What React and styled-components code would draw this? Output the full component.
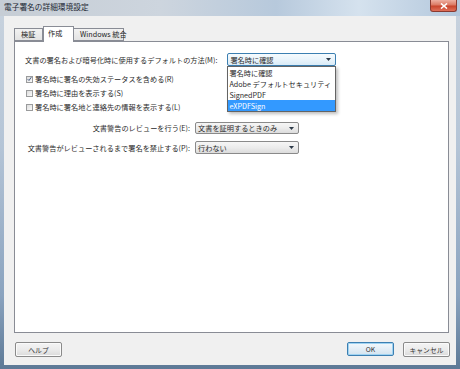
import React from "react";
import styled, { createGlobalStyle } from "styled-components";

const Global = createGlobalStyle`
  html, body { margin: 0; padding: 0; }
  body { width: 460px; height: 369px; overflow: hidden; font-family: "Noto Sans CJK JP", "Noto Sans", sans-serif; }
  * { box-sizing: border-box; }
`;

const Window = styled.div`
  width: 460px;
  height: 369px;
  display: flex;
  flex-direction: column;
  background: linear-gradient(to bottom, #c9d3de 0%, #b4c4d6 40%, #8aa3bf 80%, #5d7996 100%);
`;

const TitleBar = styled.div`
  height: 16px;
  flex: none;
  display: flex;
  align-items: center;
  justify-content: space-between;
  padding-left: 4px;
  background: linear-gradient(to right, #c6cdd5 0%, #cdd5de 35%, #b7c9dc 60%, #d5e2ee 78%, #b3c7dc 100%);
`;

const Title = styled.span`
  font-size: 7.7px;
  line-height: 10px;
  color: #1c2733;
  margin-top: -2px;
`;

const CloseButton = styled.div`
  align-self: flex-start;
  width: 27px;
  height: 12px;
  margin-right: 3px;
  border: 1px solid #8a3a30;
  border-top: none;
  border-radius: 0 0 3px 3px;
  background: linear-gradient(to bottom, #eeb0a2 0%, #dc7a64 45%, #c8452c 55%, #e0705a 100%);
  display: flex;
  align-items: center;
  justify-content: center;
`;

const Body = styled.div`
  flex: 1;
  margin: 0 4px 4px;
  background: #f0f0f0;
  display: flex;
  flex-direction: column;
  padding: 9px 6px 0 10px;
`;

const TabStrip = styled.div`
  display: flex;
  align-items: flex-end;
  height: 16px;
  position: relative;
  z-index: 1;
  margin-right: 1px;
`;

const Tab = styled.div`
  height: ${(p) => (p.$active ? "16px" : "13px")};
  margin-bottom: ${(p) => (p.$active ? "-1px" : "0")};
  width: ${(p) => p.$w}px;
  border: 1px solid #898c95;
  border-bottom: ${(p) => (p.$active ? "none" : "1px solid #898c95")};
  ${(p) => (p.$active ? "" : "border-left: none;")}
  ${(p) => (p.$first ? "border-left: 1px solid #898c95;" : "")}
  background: ${(p) => (p.$active ? "#fff" : "linear-gradient(to bottom, #f2f2f2, #e3e3e3)")};
  font-size: 7.2px;
  line-height: 11px;
  color: #222;
  padding-left: ${(p) => (p.$active ? "4px" : "6px")};
  padding-top: ${(p) => (p.$active ? "1px" : "0")};
  white-space: nowrap;
`;

const Panel = styled.div`
  height: 292px;
  margin-right: 1px;
  background: #fff;
  border: 1px solid #898c95;
  padding: 11px 0 0 10px;
  display: flex;
  flex-direction: column;
`;

const Text = styled.span`
  font-size: 7.2px;
  line-height: 10px;
  color: #2a2a2a;
  white-space: nowrap;
`;

const Row = styled.div`
  display: flex;
  align-items: center;
  gap: ${(p) => p.$gap || 0}px;
`;

const SelectWrap = styled.div`
  position: relative;
`;

const Select = styled.div`
  width: ${(p) => p.$w}px;
  height: ${(p) => p.$h || 13}px;
  border: 1px solid ${(p) => (p.$open ? "#3c7fb1" : "#8a8a8a")};
  border-radius: 2px;
  background: ${(p) =>
    p.$open
      ? "linear-gradient(to bottom, #f6fbfe 0%, #eaf4fb 50%, #d9ebf7 100%)"
      : "linear-gradient(to bottom, #f6f6f6 0%, #ececec 50%, #dcdcdc 100%)"};
  display: flex;
  align-items: center;
  justify-content: space-between;
  padding: 0 4px 0 2px;
`;

const Arrow = () => (
  <svg width="5" height="3" viewBox="0 0 5 3">
    <path d="M0 0 H5 L2.5 3 Z" fill="#2d3a48" />
  </svg>
);

const DropList = styled.div`
  position: absolute;
  top: 100%;
  left: 0;
  width: 100%;
  background: #fff;
  border: 1px solid #646464;
  box-shadow: 2px 2px 3px rgba(0, 0, 0, 0.25);
  display: flex;
  flex-direction: column;
  z-index: 5;
`;

const Option = styled.div`
  height: 11px;
  padding-left: 1px;
  display: flex;
  align-items: center;
  font-size: 7.2px;
  color: ${(p) => (p.$sel ? "#fff" : "#2a2a2a")};
  background: ${(p) => (p.$sel ? "#3399ff" : "transparent")};
  white-space: nowrap;
`;

const Checks = styled.div`
  display: flex;
  flex-direction: column;
  margin-top: 6px;
  padding-left: 1px;
`;

const CheckRow = styled.div`
  height: 14px;
  display: flex;
  align-items: center;
  gap: 2px;
`;

const Box = styled.div`
  width: 7px;
  height: 7px;
  border: 1px solid #9a9b9c;
  background: linear-gradient(to bottom right, #dcdcdc, #fafafa);
  display: flex;
  align-items: center;
  justify-content: center;
`;

const Grid = styled.div`
  display: grid;
  grid-template-columns: 165px 104px;
  column-gap: 5px;
  row-gap: 7px;
  align-items: center;
  margin-top: 8px;
`;

const RightLabel = styled(Text)`
  text-align: right;
`;

const ButtonBar = styled.div`
  display: flex;
  align-items: center;
  justify-content: space-between;
  margin-top: 9px;
  padding-left: 1px;
`;

const Group = styled.div`
  display: flex;
  gap: 9px;
`;

const Button = styled.div`
  width: 47px;
  height: ${(p) => (p.$default ? 14 : 15)}px;
  border: 1px solid ${(p) => (p.$default ? "#3c7fb1" : "#8a8a8a")};
  border-radius: 2px;
  background: ${(p) =>
    p.$default
      ? "linear-gradient(to bottom, #f2f8fc 0%, #e3eef6 50%, #d3e3ef 100%)"
      : "linear-gradient(to bottom, #f4f4f4 0%, #ebebeb 50%, #dadada 100%)"};
  box-shadow: ${(p) => (p.$default ? "inset 0 0 0 1px #9fd3f2" : "inset 0 0 0 1px #fafafa")};
  display: flex;
  align-items: center;
  justify-content: center;
  font-size: 6.8px;
  color: #333;
`;

export default function App() {
  return (
    <>
      <Global />
      <Window>
        <TitleBar>
          <Title>電子署名の詳細環境設定</Title>
          <CloseButton>
            <svg width="8" height="6" viewBox="0 0 8 6">
              <path d="M1 0.5 L7 5.5 M7 0.5 L1 5.5" stroke="#fff" strokeWidth="1.6" />
            </svg>
          </CloseButton>
        </TitleBar>
        <Body>
          <TabStrip>
            <Tab $first $w={29}>検証</Tab>
            <Tab $active $w={31}>作成</Tab>
            <Tab $w={50}>Windows 統合</Tab>
          </TabStrip>
          <Panel>
            <Row $gap={10}>
              <Text>文書の署名および暗号化時に使用するデフォルトの方法(M):</Text>
              <SelectWrap>
                <Select $open $w={109}>
                  <Text>署名時に確認</Text>
                  <Arrow />
                </Select>
                <DropList>
                  <Option>署名時に確認</Option>
                  <Option>Adobe デフォルトセキュリティ</Option>
                  <Option>SignedPDF</Option>
                  <Option $sel>eXPDFSign</Option>
                </DropList>
              </SelectWrap>
            </Row>
            <Checks>
              <CheckRow>
                <Box>
                  <svg width="6" height="6" viewBox="0 0 6 6">
                    <path d="M0.8 3.2 L2.4 4.8 L5.2 0.8" stroke="#4a5f85" strokeWidth="1.2" fill="none" />
                  </svg>
                </Box>
                <Text>署名時に署名の失効ステータスを含める(R)</Text>
              </CheckRow>
              <CheckRow>
                <Box />
                <Text>署名時に理由を表示する(S)</Text>
              </CheckRow>
              <CheckRow>
                <Box />
                <Text>署名時に署名地と連絡先の情報を表示する(L)</Text>
              </CheckRow>
            </Checks>
            <Grid>
              <RightLabel>文書警告のレビューを行う(E):</RightLabel>
              <Select $w={104} $h={12}>
                <Text>文書を証明するときのみ</Text>
                <Arrow />
              </Select>
              <RightLabel>文書警告がレビューされるまで署名を禁止する(P):</RightLabel>
              <Select $w={104} $h={13}>
                <Text>行わない</Text>
                <Arrow />
              </Select>
            </Grid>
          </Panel>
          <ButtonBar>
            <Button>ヘルプ</Button>
            <Group>
              <Button $default>OK</Button>
              <Button>キャンセル</Button>
            </Group>
          </ButtonBar>
        </Body>
      </Window>
    </>
  );
}
